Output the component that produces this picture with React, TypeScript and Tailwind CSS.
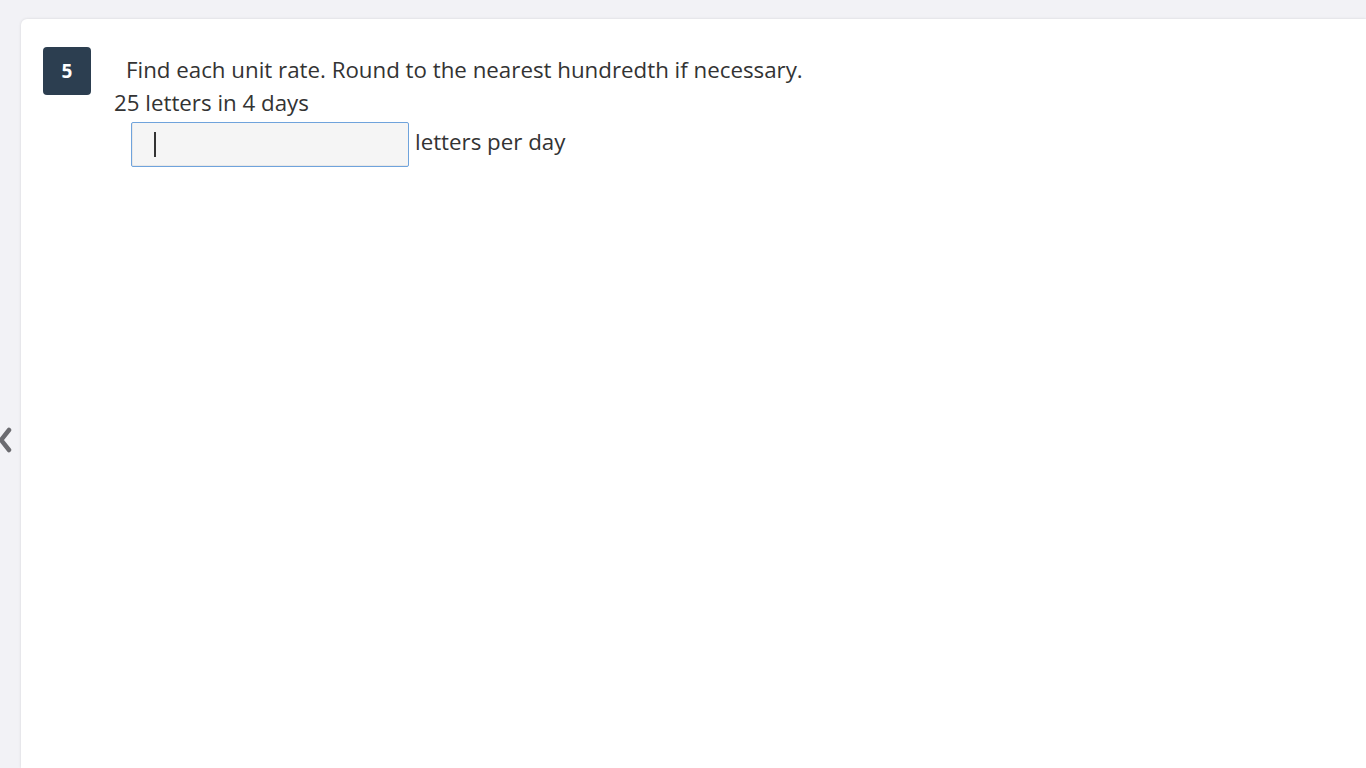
import React from "react";

export default function App() {
  return (
    <div
      className="relative min-h-screen w-full bg-[#f2f2f6] overflow-hidden"
      style={{ fontFamily: '"Open Sans", "Noto Sans", sans-serif' }}
    >
      <div className="absolute left-0 top-[427px]">
        <svg width="12" height="26" viewBox="0 0 12 26">
          <path d="M9 3 L1 13 L9 23" fill="none" stroke="#6b6b70" strokeWidth="4.5" strokeLinecap="round" strokeLinejoin="round" />
        </svg>
      </div>
      <div className="ml-[21px] mt-[19px] h-[749px] bg-white rounded-tl-[6px] shadow-[0_0_3px_rgba(0,0,0,0.12)] pt-[28px] pl-[22px]">
        <div className="flex">
          <div className="w-[48px] h-[48px] rounded-[4px] bg-[#2c3e50] text-white font-bold text-[19px] flex items-center justify-center shrink-0">
            5
          </div>
          <div className="ml-[23px] text-[#333333] text-[22.3px] leading-[32px]">
            <div className="pl-[12px] pt-[7px]">Find each unit rate. Round to the nearest hundredth if necessary.</div>
            <div className="mt-[1px]">25 letters in 4 days</div>
            <div className="flex items-center mt-[3px] ml-[17px]">
              <div className="w-[278px] h-[45px] border border-[#6fa3dc] rounded-[2px] bg-[#f5f5f5] flex items-center pl-[22px] shadow-[inset_1px_-1px_0_rgba(0,0,0,0.05)]">
                <div className="w-[2px] h-[25px] bg-[#333]" />
              </div>
              <span className="ml-[6px] mb-[6px]">letters per day</span>
            </div>
          </div>
        </div>
      </div>
    </div>
  );
}
